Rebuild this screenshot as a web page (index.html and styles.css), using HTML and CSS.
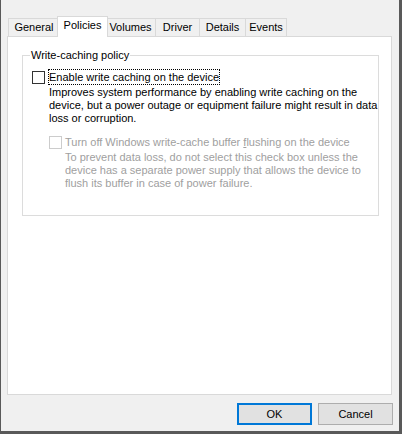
FILE: index.html
```html
<!DOCTYPE html>
<html>
<head>
<meta charset="utf-8">
<link rel="stylesheet" href="styles.css">
</head>
<body>
<div class="window">
  <div class="tabs">
    <div class="tab tab-general">General</div>
    <div class="tab tab-policies selected">Policies</div>
    <div class="tab tab-volumes">Volumes</div>
    <div class="tab tab-driver">Driver</div>
    <div class="tab tab-details">Details</div>
    <div class="tab tab-events">Events</div>
  </div>
  <div class="panel">
    <fieldset class="group">
      <legend class="group-title">Write-caching policy</legend>
      <div class="check-row">
        <span class="checkbox"></span>
        <span class="check-label focused">Enable write caching on the device</span>
      </div>
      <p class="desc">Improves system performance by enabling write caching on the<br>device, but a power outage or equipment failure might result in data<br>loss or corruption.</p>
      <div class="check-row sub disabled">
        <span class="checkbox"></span>
        <span class="check-label">Turn off Windows write-cache buffer <u>f</u>lushing on the device</span>
      </div>
      <p class="desc sub-desc disabled">To prevent data loss, do not select this check box unless the<br>device has a separate power supply that allows the device to<br>flush its buffer in case of power failure.</p>
    </fieldset>
  </div>
  <div class="buttons">
    <button class="btn default">OK</button>
    <button class="btn">Cancel</button>
  </div>
</div>
</body>
</html>
```

FILE: styles.css
```css
html, body {
  margin: 0;
  padding: 0;
  background: #f0f0f0;
}
body {
  font-family: "Liberation Sans", Arial, sans-serif;
  font-size: 11px;
  color: #000;
}
.window {
  width: 402px;
  height: 434px;
  box-sizing: border-box;
  border-left: 1px solid #595959;
  border-right: 3px solid #595959;
  border-bottom: 3px solid #595959;
  padding: 16px 6px 0 6px;
  background: #f0f0f0;
}
.tabs {
  display: flex;
  align-items: flex-end;
  height: 20px;
  margin-left: 1px;
}
.tab {
  box-sizing: border-box;
  height: 18px;
  border: 1px solid #d9d9d9;
  border-bottom: none;
  background: #f0f0f0;
  text-align: center;
  line-height: 17px;
  margin-right: -1px;
  white-space: nowrap;
}
.tab-general { width: 52px; }
.tab-policies { width: 47px; }
.tab-volumes { width: 51px; }
.tab-driver { width: 45px; }
.tab-details { width: 47px; }
.tab-events { width: 42px; }
.tab.selected {
  position: relative;
  z-index: 2;
  height: 21px;
  width: 51px;
  margin-left: -2px;
  margin-right: -3px;
  margin-bottom: -1px;
  background: #fff;
  line-height: 16px;
  padding-bottom: 4px;
}
.panel {
  box-sizing: border-box;
  width: 385px;
  height: 359px;
  border: 1px solid #d9d9d9;
  background: #fff;
  padding-top: 12px;
}
.group {
  margin: 0 12px 0 14px;
  padding: 7px 0 25px 9px;
  border: 1px solid #dcdcdc;
  min-width: 0;
}
.group-title {
  padding: 0 1px;
  margin-left: -2px;
  line-height: 13px;
}
.check-row {
  display: flex;
  align-items: center;
  height: 16px;
}
.checkbox {
  box-sizing: border-box;
  width: 13px;
  height: 13px;
  border: 1px solid #333;
  background: #fff;
  margin-right: 3px;
  flex: none;
}
.check-label {
  border: 1px dotted transparent;
  line-height: 14px;
  white-space: nowrap;
}
.check-label.focused {
  border-color: #000;
}
.desc {
  margin: 1px 0 0 17px;
  line-height: 13px;
  white-space: nowrap;
}
.check-row.sub {
  margin: 9px 0 0 17px;
}
.sub-desc {
  margin-left: 33px;
  margin-top: 1px;
}
.disabled {
  color: #a0a0a0;
}
.disabled .checkbox {
  border-color: #cccccc;
}
.check-row.sub .check-label {
  margin-left: -1px;
}
.buttons {
  display: flex;
  justify-content: flex-end;
  gap: 6px;
  margin-top: 8px;
  padding-right: 0;
}
.btn {
  box-sizing: border-box;
  width: 75px;
  height: 22px;
  border: 1px solid #adadad;
  background: #e1e1e1;
  font-family: "Liberation Sans", Arial, sans-serif;
  font-size: 11px;
  color: #000;
  padding: 0;
  margin: 0;
}
.btn.default {
  border: 2px solid #0078d7;
}
```
